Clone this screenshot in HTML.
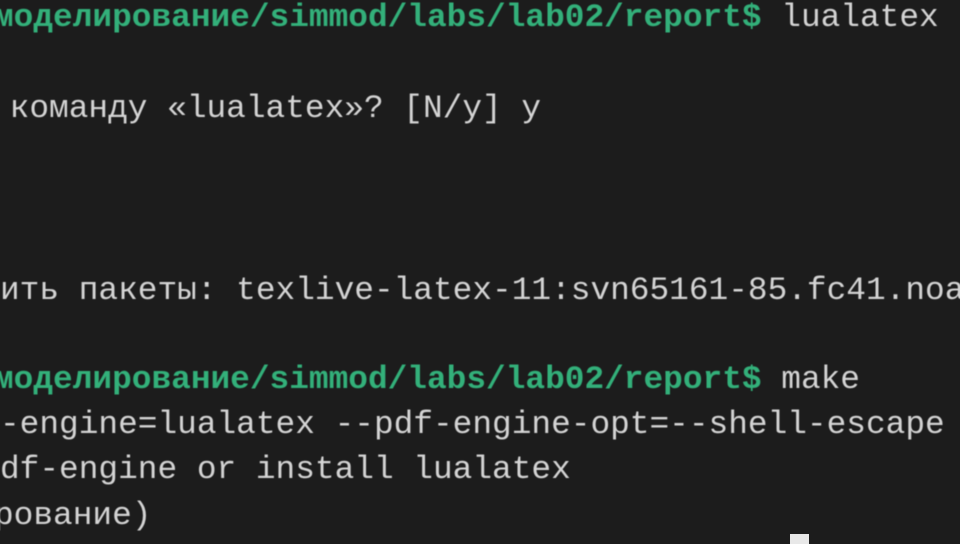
<!DOCTYPE html>
<html><head><meta charset="utf-8"><style>
html,body{margin:0;padding:0;background:#1c1c1c;width:960px;height:540px;overflow:hidden}
.l{position:absolute;white-space:pre;font-family:"Liberation Mono","DejaVu Sans Mono",monospace;font-size:32.8px;line-height:40px;color:#d4d4d4;filter:blur(0.4px)}
.g{color:#33b07a;font-weight:bold}
.cur{position:absolute;left:790px;top:534px;width:19px;height:10px;background:#e8e8e8}
</style></head><body>
<div class="l" style="left:-6px;top:-2px"><span class="g">моделирование/simmod/labs/lab02/report$</span> lualatex</div>
<div class="l" style="left:-10px;top:89px"> команду «lualatex»? [N/y] y</div>
<div class="l" style="left:0px;top:271px">ить пакеты: texlive-latex-11:svn65161-85.fc41.noarch</div>
<div class="l" style="left:-6px;top:360px"><span class="g">моделирование/simmod/labs/lab02/report$</span> make</div>
<div class="l" style="left:0px;top:405px">-engine=lualatex --pdf-engine-opt=--shell-escape</div>
<div class="l" style="left:0px;top:450px">df-engine or install lualatex</div>
<div class="l" style="left:-6px;top:496px">рование)</div>
<div class="cur"></div>
</body></html>
